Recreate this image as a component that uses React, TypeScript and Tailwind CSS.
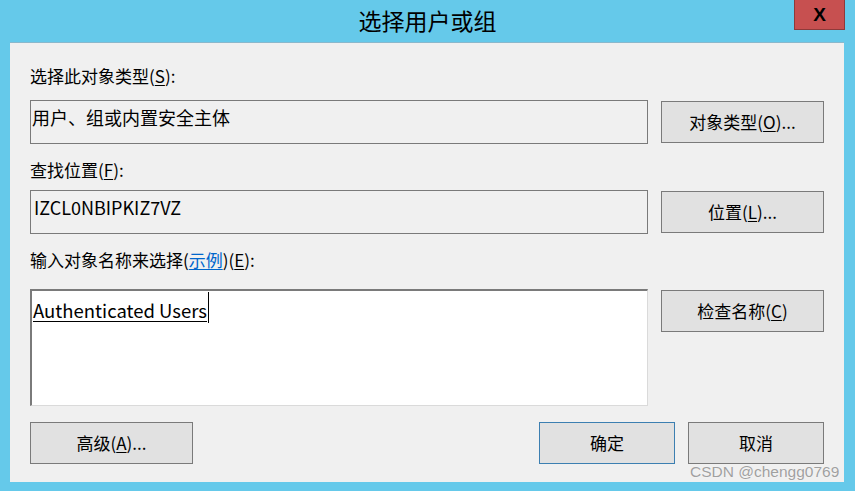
import React from "react";

function U({ children }: { children: React.ReactNode }) {
  return <span className="underline underline-offset-2 decoration-1">{children}</span>;
}

function Btn({ children, w, blue }: { children: React.ReactNode; w: string; blue?: boolean }) {
  return (
    <div
      className={`${w} h-[42px] flex items-center justify-center bg-[#e1e1e1] border ${
        blue ? "border-[#3c7fb1]" : "border-[#7a7a7a]"
      } text-[17px] text-black`}
    >
      {children}
    </div>
  );
}

export default function App() {
  return (
    <div className="w-[855px] h-[491px] bg-[#65c9ea] flex flex-col font-['Noto_Sans_CJK_SC',sans-serif] text-black relative overflow-hidden">
      {/* Title bar */}
      <div className="h-[42px] relative flex items-center justify-center">
        <span className="text-[23px] leading-none pb-[1px]">选择用户或组</span>
        <div className="absolute left-[794px] top-0 w-[51px] h-[30px] bg-[#c75050] border border-t-0 border-[#8e3a3a] flex items-center justify-center">
          <span className="font-['Liberation_Sans',sans-serif] font-bold text-[19px] leading-none">X</span>
        </div>
      </div>

      {/* Client area */}
      <div className="ml-[10px] mr-[11px] h-[440px] bg-[#f0f0f0] border-t border-[#8ab8cc] pl-[20px] pr-[20px] pt-[21px] flex flex-col text-[17px]">
        <div className="h-[24px] leading-[24px]">
          选择此对象类型(<U>S</U>):
        </div>
        <div className="mt-[12px] flex items-center gap-[13px]">
          <div className="w-[618px] h-[44px] border border-[#7a7a7a] pl-[1px] pt-[4px] text-[18px] leading-[24px]">
            用户、组或内置安全主体
          </div>
          <Btn w="w-[163px]">
            对象类型(<U>O</U>)...
          </Btn>
        </div>

        <div className="mt-[14px] h-[24px] leading-[24px]">
          查找位置(<U>F</U>):
        </div>
        <div className="mt-[8px] flex items-center gap-[13px]">
          <div className="w-[618px] h-[44px] border border-[#7a7a7a] pl-[3px] pt-[4px] text-[18px] leading-[24px]">
            IZCL0NBIPKIZ7VZ
          </div>
          <Btn w="w-[163px]">
            位置(<U>L</U>)...
          </Btn>
        </div>

        <div className="mt-[14px] h-[24px] leading-[24px]">
          输入对象名称来选择(<span className="text-[#0066cc] underline underline-offset-2 decoration-1">示例</span>)(<U>E</U>):
        </div>
        <div className="mt-[17px] flex items-start gap-[13px]">
          <div className="w-[618px] h-[117px] bg-white border-t-2 border-l-2 border-[#7a7a7a] border-r border-b border-r-[#dadada] border-b-[#dadada] pl-[1px] pt-[1px]">
            <div className="flex items-start">
              <span className="mt-[3px] text-[18.5px] leading-[30px] underline underline-offset-[3px] decoration-1">Authenticated Users</span>
              <span className="inline-block w-[1px] h-[31px] bg-black ml-[1px]" />
            </div>
          </div>
          <div className="mt-[1px]">
            <Btn w="w-[163px]">
              检查名称(<U>C</U>)
            </Btn>
          </div>
        </div>

        <div className="mt-[16px] flex items-center">
          <Btn w="w-[163px]">
            高级(<U>A</U>)...
          </Btn>
          <div className="flex-1" />
          <div className="flex gap-[13px]">
            <Btn w="w-[136px]" blue>
              确定
            </Btn>
            <Btn w="w-[136px]">取消</Btn>
          </div>
        </div>
      </div>

      {/* Watermark */}
      <div className="absolute left-[690px] top-[463px] text-[15.5px] leading-[18px] text-[#a0a0a0] font-['Liberation_Sans',sans-serif] [text-shadow:0_0_1px_#ffffff]">
        CSDN @chengg0769
      </div>
    </div>
  );
}
